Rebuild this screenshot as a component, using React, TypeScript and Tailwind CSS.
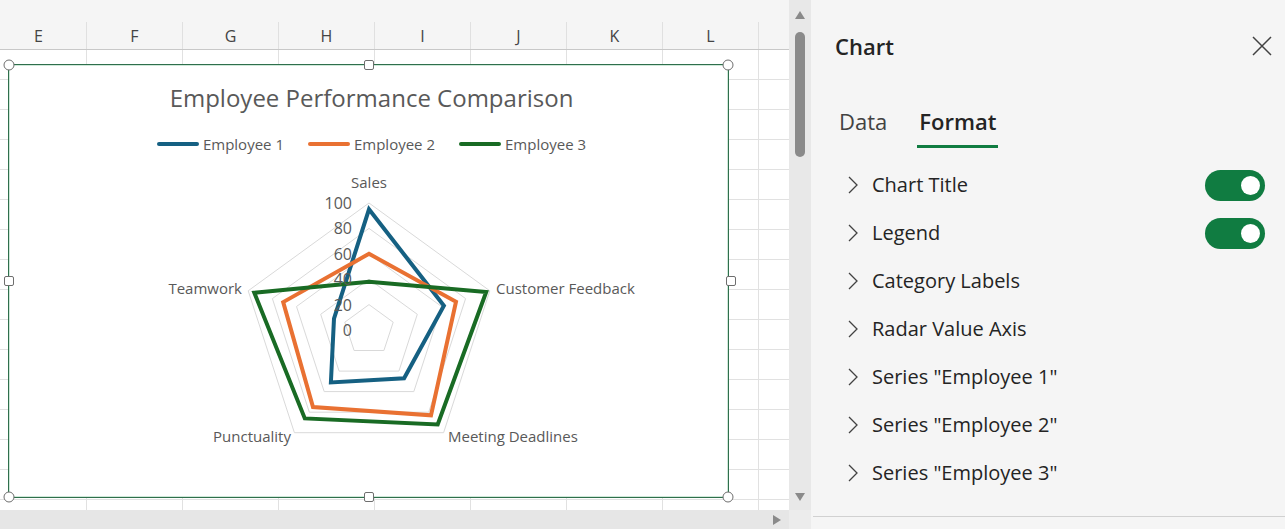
import React from 'react';

// Sheet columns visible behind the chart (the last one is only partly on screen)
const COLUMNS = ['E', 'F', 'G', 'H', 'I', 'J', 'K', 'L', ''];
const ROW_COUNT = 16;

interface Series {
  name: string;
  color: string;
  values: number[]; // Sales, Customer Feedback, Meeting Deadlines, Punctuality, Teamwork
}

const SERIES: Series[] = [
  { name: 'Employee 1', color: '#156082', values: [95, 62, 47, 51, 29] },
  { name: 'Employee 2', color: '#e97132', values: [60, 72, 83, 75, 71] },
  { name: 'Employee 3', color: '#196b24', values: [38, 97, 92, 86, 95] },
];

const PANE_ITEMS = [
  { label: 'Chart Title', toggle: true },
  { label: 'Legend', toggle: true },
  { label: 'Category Labels', toggle: false },
  { label: 'Radar Value Axis', toggle: false },
  { label: 'Series "Employee 1"', toggle: false },
  { label: 'Series "Employee 2"', toggle: false },
  { label: 'Series "Employee 3"', toggle: false },
];

// radar geometry, in the chart's inner coordinates
const CX = 360;
const CY = 265;
const R = 127;

function point(i: number, v: number): [number, number] {
  const a = (i * 72 * Math.PI) / 180;
  return [CX + (R * v * Math.sin(a)) / 100, CY - (R * v * Math.cos(a)) / 100];
}

function polygon(values: number[]) {
  return values.map((v, i) => point(i, v).map((n) => n.toFixed(1)).join(',')).join(' ');
}

function RadarPlot() {
  return (
    <svg className="absolute inset-0 h-full w-full" viewBox="0 0 719 432" style={{ fontFamily: '"Open Sans", sans-serif' }}>
      {/* grid rings */}
      {[20, 40, 60, 80, 100].map((lvl) => (
        <polygon key={lvl} points={polygon([lvl, lvl, lvl, lvl, lvl])} fill="none" stroke="#d9d9d9" strokeWidth="1" />
      ))}

      {/* series */}
      {SERIES.map((s) => (
        <polygon key={s.name} points={polygon(s.values)} fill="none" stroke={s.color} strokeWidth="4" strokeLinejoin="miter" />
      ))}

      {/* value axis labels */}
      {[0, 20, 40, 60, 80, 100].map((lvl) => (
        <text key={lvl} x="343" y={CY - (R * lvl) / 100 + 6} textAnchor="end" fontSize="16" fill="#595959">
          {lvl}
        </text>
      ))}

      {/* category labels */}
      <text x="360" y="123" textAnchor="middle" fontSize="15" fill="#595959">Sales</text>
      <text x="487" y="229" textAnchor="start" fontSize="15" fill="#595959">Customer Feedback</text>
      <text x="439" y="377" textAnchor="start" fontSize="15" fill="#595959">Meeting Deadlines</text>
      <text x="282" y="377" textAnchor="end" fontSize="15" fill="#595959">Punctuality</text>
      <text x="233" y="229" textAnchor="end" fontSize="15" fill="#595959">Teamwork</text>
    </svg>
  );
}

function Handle({ round, className }: { round: boolean; className: string }) {
  return (
    <div
      className={`absolute z-10 -translate-x-1/2 -translate-y-1/2 border-[1.5px] border-[#6e6e6e] bg-white ${
        round ? 'h-[11px] w-[11px] rounded-full' : 'h-[10px] w-[10px] rounded-[2px]'
      } ${className}`}
    />
  );
}

function Chart() {
  return (
    <div className="absolute left-[8px] top-[64px] h-[434px] w-[721px] border border-[#2f6f4c] bg-white shadow-[inset_0_0_0_1px_#cfe8d9]">
      <RadarPlot />

      <div className="relative flex flex-col items-center pl-[6px] pt-[17px] text-[#595959]" style={{ fontFamily: '"Open Sans", sans-serif' }}>
        <div className="text-[24px] leading-[32px]">Employee Performance Comparison</div>
        <div className="mt-[20px] flex items-center gap-[24px]">
          {SERIES.map((s) => (
            <div key={s.name} className="flex items-center gap-[4px]">
              <span className="h-[4px] w-[42px] rounded-full" style={{ backgroundColor: s.color }} />
              <span className="text-[15px] leading-[20px]">{s.name}</span>
            </div>
          ))}
        </div>
      </div>

      {/* selection handles */}
      <Handle round className="left-0 top-0" />
      <Handle round className="left-full top-0" />
      <Handle round className="left-0 top-full" />
      <Handle round className="left-full top-full" />
      <Handle round={false} className="left-1/2 top-0" />
      <Handle round={false} className="left-1/2 top-full" />
      <Handle round={false} className="left-0 top-1/2" />
      <Handle round={false} className="left-[722px] top-1/2" />
    </div>
  );
}

function Sheet() {
  return (
    <div className="relative flex w-[789px] flex-col overflow-hidden bg-white" style={{ fontFamily: '"Open Sans", sans-serif' }}>
      <div className="h-[22px] shrink-0 bg-[#f5f5f5]" />
      <div className="-ml-[9px] flex h-[28px] shrink-0 border-b border-[#c8c8c8] bg-[#f5f5f5]">
        {COLUMNS.map((c, i) => (
          <div key={i} className="flex w-[96px] shrink-0 items-center justify-center border-r border-[#e0e0e0] text-[16px] text-[#444444]">
            {c}
          </div>
        ))}
      </div>
      <div className="-ml-[9px] flex flex-col">
        {Array.from({ length: ROW_COUNT }).map((_, r) => (
          <div key={r} className="flex h-[30px] shrink-0 border-b border-[#e1e1e1]">
            {COLUMNS.map((_, i) => (
              <div key={i} className="w-[96px] shrink-0 border-r border-[#e1e1e1]" />
            ))}
          </div>
        ))}
      </div>
      <Chart />
    </div>
  );
}

function VerticalScrollbar() {
  return (
    <div className="flex w-[22px] flex-col items-center bg-[#e8e8e8] pt-[11px] pb-[9px]">
      <div className="h-0 w-0 border-x-[5px] border-b-[8px] border-x-transparent border-b-[#8a8a8a]" />
      <div className="mt-[13px] h-[125px] w-[10px] rounded-full bg-[#8a8a8a]" />
      <div className="flex-1" />
      <div className="h-0 w-0 border-x-[5px] border-t-[8px] border-x-transparent border-t-[#8a8a8a]" />
    </div>
  );
}

function Toggle() {
  return (
    <div className="flex h-[31px] w-[60px] items-center justify-end rounded-full bg-[#107c41] pr-[5px]">
      <div className="h-[19px] w-[19px] rounded-full bg-white" />
    </div>
  );
}

function Chevron() {
  return (
    <svg width="12" height="20" viewBox="0 0 12 20" fill="none" stroke="#424242" strokeWidth="1.3">
      <path d="M2 2l8 8-8 8" />
    </svg>
  );
}

function FormatPane() {
  return (
    <div className="flex flex-1 flex-col bg-[#f5f5f5] text-[#242424]" style={{ fontFamily: '"Open Sans", sans-serif' }}>
      <div className="flex h-[94px] shrink-0 items-center justify-between pb-[2px] pl-[24px] pr-[13px]">
        <span className="text-[22px] font-semibold">Chart</span>
        <svg width="20" height="20" viewBox="0 0 20 20" stroke="#424242" strokeWidth="1.5">
          <path d="M1 1l18 18M19 1L1 19" />
        </svg>
      </div>

      <div className="flex h-[54px] shrink-0 items-stretch gap-[27px] pl-[25px]">
        <div className="flex items-center px-[3px] pt-[1px] text-[22px] text-[#424242]">Data</div>
        <div className="flex flex-col justify-center border-b-[3px] border-[#107c41] px-[2px] pt-[3px] text-[22px] font-semibold">
          Format
        </div>
      </div>

      <div className="mt-[13px] flex flex-col">
        {PANE_ITEMS.map((item) => (
          <div key={item.label} className="flex h-[48px] items-center pl-[36px] pr-[20px]">
            <Chevron />
            <span className="ml-[13px] flex-1 text-[20px]">{item.label}</span>
            {item.toggle && <Toggle />}
          </div>
        ))}
      </div>

      <div className="ml-[2px] mt-[19px] border-t border-[#d1d1d1]" />
    </div>
  );
}

export default function App() {
  return (
    <div className="flex h-[529px] w-[1285px] overflow-hidden bg-[#f5f5f5]">
      <div className="flex w-[811px] shrink-0 flex-col">
        <div className="flex h-[510px] shrink-0">
          <Sheet />
          <VerticalScrollbar />
        </div>
        <div className="flex h-[19px] shrink-0 bg-[#e6e6e6]">
          <div className="flex w-[789px] items-center justify-end pr-[8px]">
            <div className="h-0 w-0 border-y-[5px] border-l-[8px] border-y-transparent border-l-[#8a8a8a]" />
          </div>
          <div className="flex-1 bg-[#ececec]" />
        </div>
      </div>
      <FormatPane />
    </div>
  );
}
